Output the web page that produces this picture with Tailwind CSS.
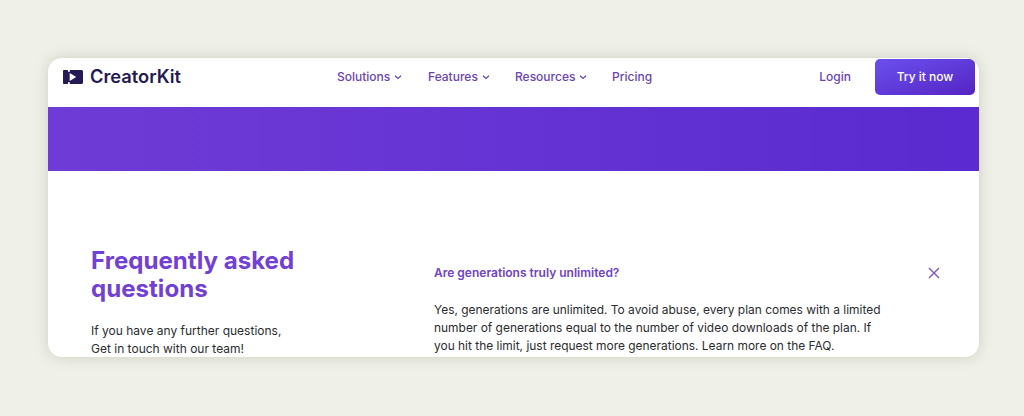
<!DOCTYPE html>
<html lang="en">
<head>
    <meta charset="UTF-8">
    <title>CreatorKit FAQ</title>
    <script src="https://cdn.jsdelivr.net/npm/@tailwindcss/browser@4"></script>
</head>
<body class="bg-[#eff0e8] font-['Inter',sans-serif] h-[416px] overflow-hidden pt-[58px] px-12">
    <div class="w-[931px] h-[299px] bg-white rounded-[14px] shadow-[0_0_14px_rgba(120,120,90,0.28)] overflow-hidden">
        <!-- nav -->
        <header class="h-[49px] pb-[11px] flex items-center">
            <div class="flex items-center ml-[15px] w-[274px]">
                <svg class="w-5 h-[14px] mr-[7px]" viewBox="0 0 20 14">
                    <path fill="#261a54" d="M1 0h3.800l.5 2h1.200l.5-2H18.500Q20 0 20 1.500v11q0 1.500-1.500 1.500H7l-.5-2H5.300l-.5 2H1q-1 0-1-1V1q0-1 1-1zM6.700 3v8l6.500-4z"/>
                </svg>
                <span class="text-[18.3px] font-semibold text-[#261a54]">CreatorKit</span>
            </div>
            <nav class="flex items-center text-xs font-medium text-[#6a44b4]">
                <a class="flex items-center w-[91px]">Solutions
                    <svg class="w-2 h-2 ml-1" viewBox="0 0 8 8" fill="none" stroke="#6a44b4" stroke-width="1.300"><path d="M1 2.800 4 5.500 7 2.800"/></svg></a>
                <a class="flex items-center w-[87px]">Features
                    <svg class="w-2 h-2 ml-1" viewBox="0 0 8 8" fill="none" stroke="#6a44b4" stroke-width="1.300"><path d="M1 2.800 4 5.500 7 2.800"/></svg></a>
                <a class="flex items-center w-[97px]">Resources
                    <svg class="w-2 h-2 ml-1" viewBox="0 0 8 8" fill="none" stroke="#6a44b4" stroke-width="1.300"><path d="M1 2.800 4 5.500 7 2.800"/></svg></a>
                <a>Pricing</a>
            </nav>
            <a class="ml-auto mr-6 text-xs font-medium text-[#6a44b4]">Login</a>
            <button class="w-[100px] h-9 mr-1 rounded-[5px] bg-gradient-to-br from-[#6a50ee] to-[#5522c4] text-white text-xs font-medium">Try it now</button>
        </header>
        <!-- banner -->
        <div class="h-[64px] bg-gradient-to-r from-[#6f3bd6] to-[#5b2ad0]"></div>
        <!-- faq -->
        <section class="flex pt-[76px] pl-[43px]">
            <div class="w-[343px]">
                <h2 class="text-[24.1px] leading-7 font-bold text-[#7240d4] w-[220px]">Frequently asked questions</h2>
                <p class="mt-[19px] text-xs leading-[18px] text-[#2c2c30]">If you have any further questions,<br>Get in touch with our team!</p>
            </div>
            <div class="w-[506px] pt-[17px]">
                <div class="flex items-center justify-between h-[18px]">
                    <h3 class="text-xs font-semibold text-[#6f42c8]">Are generations truly unlimited?</h3>
                    <svg class="w-3 h-3" viewBox="0 0 12 12" fill="none" stroke="#7a52cc" stroke-width="1.400"><path d="M1 1l10 10M11 1 1 11"/></svg>
                </div>
                <p class="mt-[19px] w-[460px] text-[11.95px] leading-[18px] text-[#2c2c30]">Yes, generations are unlimited. To avoid abuse, every plan comes with a limited number of generations equal to the number of video downloads of the plan. If you hit the limit, just request more generations. Learn more on the FAQ.</p>
            </div>
        </section>
    </div>
</body>
</html>
